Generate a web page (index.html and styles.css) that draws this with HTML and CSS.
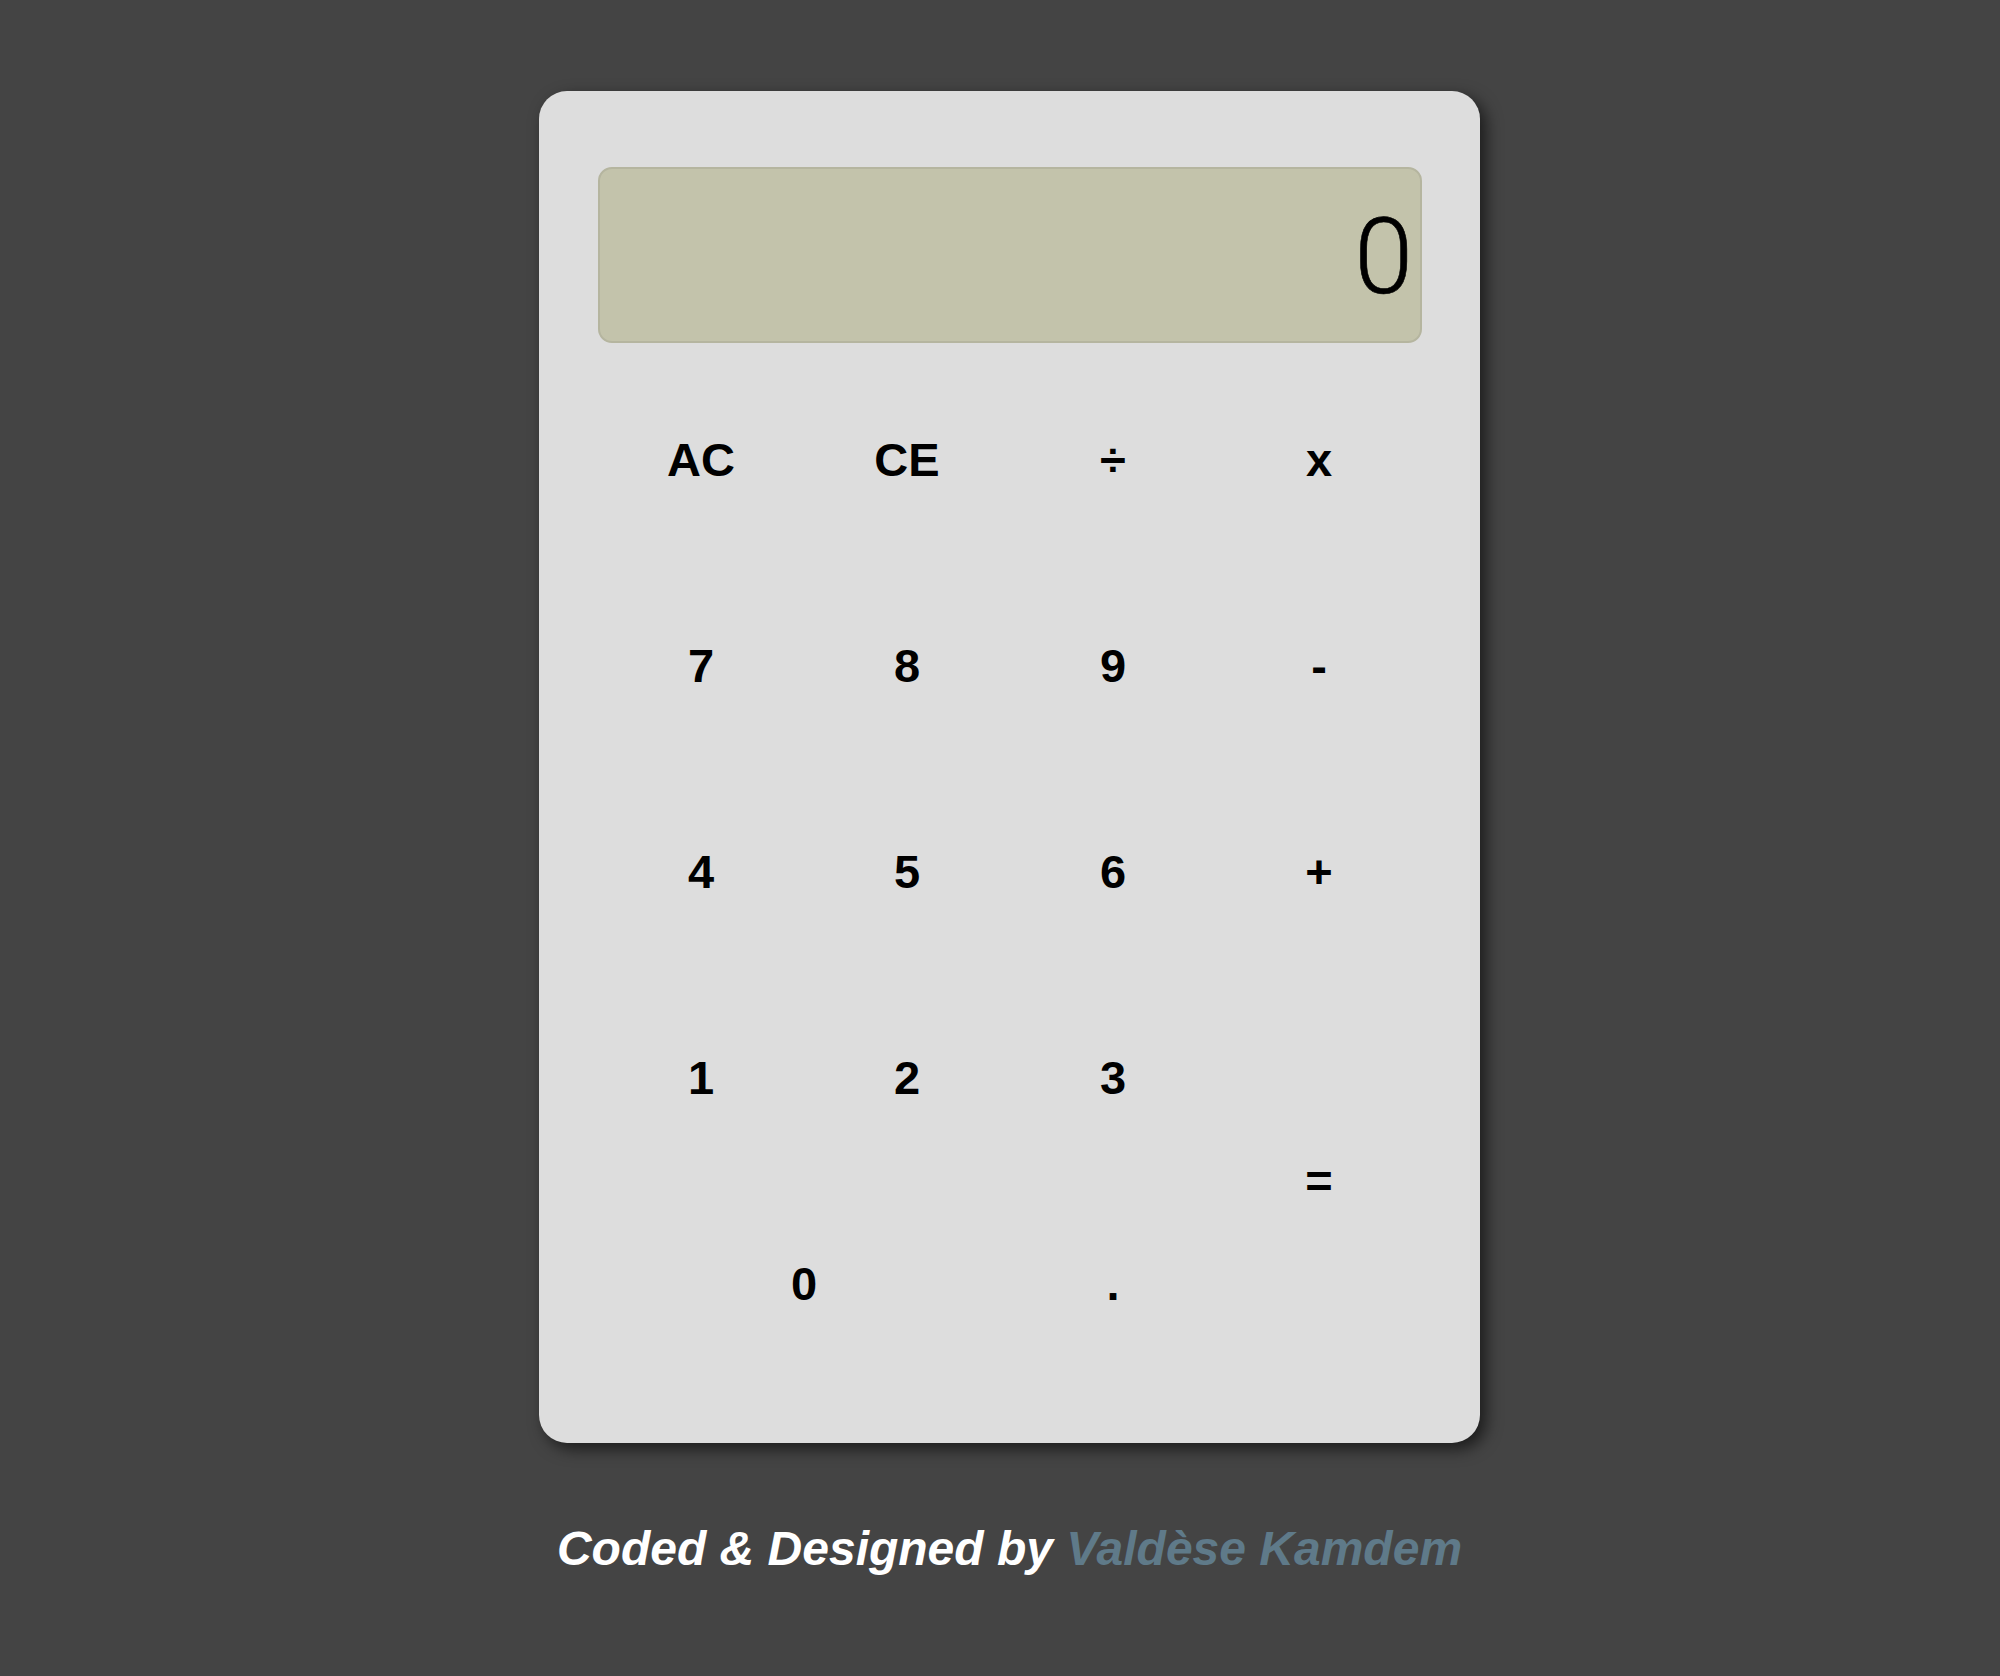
FILE: index.html
```html
<!DOCTYPE html>
<html lang="en">
<head>
<meta charset="utf-8">
<title>Calculator</title>
<link rel="stylesheet" href="styles.css">
</head>
<body>
<main class="page">
  <div class="calculator">
    <div class="display"><span class="display-value">0</span></div>
    <div class="keys">
      <button class="key">AC</button>
      <button class="key">CE</button>
      <button class="key">÷</button>
      <button class="key">x</button>
      <button class="key">7</button>
      <button class="key">8</button>
      <button class="key">9</button>
      <button class="key">-</button>
      <button class="key">4</button>
      <button class="key">5</button>
      <button class="key">6</button>
      <button class="key">+</button>
      <button class="key">1</button>
      <button class="key">2</button>
      <button class="key">3</button>
      <button class="key key-equals">=</button>
      <button class="key key-zero">0</button>
      <button class="key">.</button>
    </div>
  </div>
  <p class="credit">Coded &amp; Designed by <a class="credit-link" href="#">Valdèse Kamdem</a></p>
</main>
</body>
</html>
```

FILE: styles.css
```css
html, body {
  margin: 0;
  padding: 0;
}

body {
  background: #444444;
  font-family: "Liberation Sans", Arial, sans-serif;
}

.page {
  display: flex;
  flex-direction: column;
  align-items: center;
  padding-top: 91px;
  padding-left: 19px;
}

.calculator {
  box-sizing: border-box;
  width: 941px;
  padding: 76px 58px 57px 59px;
  background: #dddddd;
  border-radius: 28px;
  box-shadow: 6px 6px 16px rgba(0, 0, 0, 0.6);
}

.display {
  box-sizing: border-box;
  height: 176px;
  margin-bottom: 13px;
  background: #c3c3ab;
  border: 2px solid #b5b59f;
  border-radius: 14px;
  display: flex;
  align-items: center;
  justify-content: flex-end;
  padding-right: 7px;
  padding-top: 4px;
}

.display-value {
  font-family: Roboto, "Liberation Sans", sans-serif;
  font-weight: 300;
  font-size: 106px;
  line-height: 1;
  color: #000;
  -webkit-text-stroke: 0.6px #000;
}

.keys {
  display: grid;
  grid-template-columns: repeat(4, 206px);
  grid-auto-rows: 206px;
}

.key {
  margin: 0;
  padding: 0;
  border: none;
  background: transparent;
  font-family: "Liberation Sans", Arial, sans-serif;
  font-weight: 700;
  font-size: 47px;
  color: #000;
  display: flex;
  align-items: center;
  justify-content: center;
}

.key-equals {
  grid-row: span 2;
}

.key-zero {
  grid-column: span 2;
}

.credit {
  margin: 78px 0 0;
  font-size: 48px;
  font-weight: 700;
  font-style: italic;
  line-height: 55px;
  color: #ffffff;
}

.credit-link {
  color: #5f7a89;
  text-decoration: none;
}
```
